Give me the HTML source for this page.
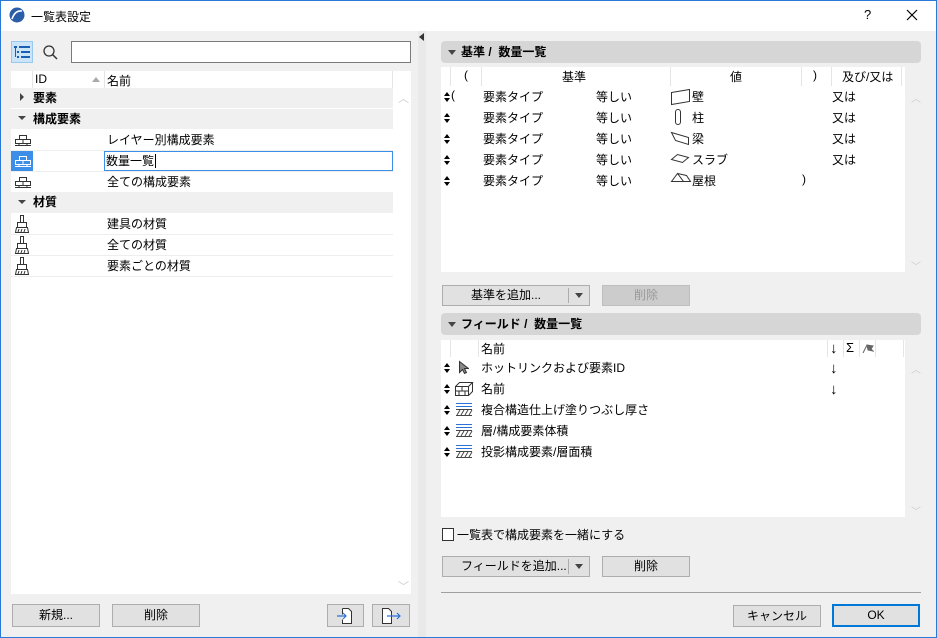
<!DOCTYPE html>
<html><head><meta charset="utf-8"><style>
*{box-sizing:border-box;margin:0;padding:0}
body{width:937px;height:638px;overflow:hidden;background:#f0f0f0;font-family:"Liberation Sans","Noto Sans CJK JP",sans-serif;font-size:12px;color:#000;position:relative}
.a{position:absolute;white-space:nowrap}
.win{position:absolute;left:0;top:0;width:937px;height:638px;border:1px solid #2b79d6;pointer-events:none}
.btn{position:absolute;background:#e1e1e1;border:1px solid #adadad;text-align:center;line-height:20px;font-size:12px}
.w{position:absolute;background:#fff}
.g{position:absolute;background:#f0f0f0}
.hdr{position:absolute;background:#d6d6d6;border-radius:4px;font-weight:bold;font-size:12px;line-height:22px;padding-left:20px}
.hdr:before{content:"";position:absolute;left:7px;top:9px;border-left:4px solid transparent;border-right:4px solid transparent;border-top:5px solid #444}
.sep{position:absolute;width:1px;background:#e5e5e5}
.ud{position:absolute;width:7px;height:10px}
.ud:before{content:"";position:absolute;left:0;top:0;border-left:3.5px solid transparent;border-right:3.5px solid transparent;border-bottom:4px solid #000}
.ud:after{content:"";position:absolute;left:0;top:6px;border-left:3.5px solid transparent;border-right:3.5px solid transparent;border-top:4px solid #000}
.dn{position:absolute;font-size:15px;line-height:15px}
</style></head><body>
<div class="w" style="left:0;top:0;width:937px;height:31px"></div>
<svg class="a" style="left:9px;top:7px" width="16" height="16"><circle cx="8" cy="8" r="7.5" fill="#2a5ea8"/><path d="M3 12 Q6 3 13 4" stroke="#fff" stroke-width="1.6" fill="none"/></svg>
<div class="a" style="left:31px;top:8px;font-size:12px">一覧表設定</div>
<div class="a" style="left:864px;top:7px;font-size:13px">?</div>
<svg class="a" style="left:906px;top:9px" width="12" height="12"><path d="M1 1L11 11M11 1L1 11" stroke="#000" stroke-width="1.2"/></svg>
<div class="g" style="left:418px;top:31px;width:8px;height:607px;background:#e9e9e9"></div>
<div class="a" style="left:419px;top:33px;border-top:4px solid transparent;border-bottom:4px solid transparent;border-right:5px solid #333"></div>

<div class="a" style="left:11px;top:41px;width:22px;height:22px;background:#cce4f7;border:1px solid #99c9ef"></div>
<svg class="a" style="left:14px;top:45px" width="16" height="14"><g fill="#1a5fb4"><rect x="0" y="1" width="3" height="2"/><rect x="5" y="1" width="11" height="2"/><rect x="3" y="6" width="2" height="2"/><rect x="7" y="6" width="9" height="2"/><rect x="3" y="11" width="2" height="2"/><rect x="7" y="11" width="9" height="2"/><rect x="1" y="3" width="1" height="9"/></g></svg>
<svg class="a" style="left:42px;top:44px" width="16" height="16"><circle cx="7" cy="7" r="5" stroke="#333" stroke-width="1.3" fill="none"/><path d="M10.5 10.5L15 15" stroke="#333" stroke-width="1.5"/></svg>
<div class="w" style="left:71px;top:41px;width:340px;height:22px;border:1px solid #7a7a7a"></div>

<div class="w" style="left:11px;top:71px;width:400px;height:523px"></div>
<div class="sep" style="left:32px;top:71px;height:17px"></div>
<div class="sep" style="left:104px;top:71px;height:17px"></div>
<div class="sep" style="left:392px;top:71px;height:17px"></div>
<div class="a" style="left:35px;top:72px">ID</div>
<div class="a" style="left:92px;top:77px;border-left:4px solid transparent;border-right:4px solid transparent;border-bottom:5px solid #aaa"></div>
<div class="a" style="left:107px;top:72px">名前</div>
<div class="g" style="left:11px;top:88px;width:382px;height:20px"></div>
<div class="a" style="left:20px;top:93px;border-top:4px solid transparent;border-bottom:4px solid transparent;border-left:4px solid #444"></div>
<div class="a" style="left:33px;top:89px;font-weight:bold">要素</div>
<div class="g" style="left:11px;top:109px;width:382px;height:20px"></div>
<div class="a" style="left:18px;top:116px;border-left:4px solid transparent;border-right:4px solid transparent;border-top:4px solid #444"></div>
<div class="a" style="left:33px;top:110px;font-weight:bold">構成要素</div>
<div class="g" style="left:11px;top:192px;width:382px;height:21px"></div>
<div class="a" style="left:18px;top:200px;border-left:4px solid transparent;border-right:4px solid transparent;border-top:4px solid #444"></div>
<div class="a" style="left:33px;top:193px;font-weight:bold">材質</div>
<div class="a" style="left:11px;top:150px;width:382px;height:1px;background:#eee"></div>
<div class="a" style="left:11px;top:171px;width:382px;height:1px;background:#eee"></div>
<div class="a" style="left:11px;top:234px;width:382px;height:1px;background:#eee"></div>
<div class="a" style="left:11px;top:255px;width:382px;height:1px;background:#eee"></div>
<div class="a" style="left:11px;top:276px;width:382px;height:1px;background:#eee"></div>
<div class="a" style="left:11px;top:151px;width:22px;height:20px;background:#3d8ee6"></div>
<div class="a" style="left:104px;top:151px;width:289px;height:20px;border:1px solid #3d8ee6;background:#fff"></div>
<svg class="a" style="left:14px;top:133px" width="18" height="14"><g fill="none" stroke="#333"><rect x="5.5" y="2.5" width="7" height="4"/><rect x="1.5" y="6.5" width="15" height="4"/><path d="M9 6.5v4M5 10.5v2M13 10.5v2M1 12.5h16"/></g></svg>
<svg class="a" style="left:14px;top:154px" width="18" height="14"><g fill="none" stroke="#fff"><rect x="5.5" y="2.5" width="7" height="4"/><rect x="1.5" y="6.5" width="15" height="4"/><path d="M9 6.5v4M5 10.5v2M13 10.5v2M1 12.5h16"/></g></svg>
<svg class="a" style="left:14px;top:175px" width="18" height="14"><g fill="none" stroke="#333"><rect x="5.5" y="2.5" width="7" height="4"/><rect x="1.5" y="6.5" width="15" height="4"/><path d="M9 6.5v4M5 10.5v2M13 10.5v2M1 12.5h16"/></g></svg>
<div class="a" style="left:107px;top:131px">レイヤー別構成要素</div>
<div class="a" style="left:106px;top:152px">数量一覧<span style="border-left:1px solid #000;margin-left:1px"></span></div>
<div class="a" style="left:107px;top:173px">全ての構成要素</div>
<svg class="a" style="left:14px;top:215px" width="18" height="19"><g fill="none" stroke="#333"><rect x="6.5" y="0.5" width="3" height="7"/><path d="M3.5 7.5h9v5h-9zM2.5 12.5h11l1 5h-13zM4 17l1-3M7 17l1-3M10 17l1-3"/></g></svg>
<svg class="a" style="left:14px;top:236px" width="18" height="19"><g fill="none" stroke="#333"><rect x="6.5" y="0.5" width="3" height="7"/><path d="M3.5 7.5h9v5h-9zM2.5 12.5h11l1 5h-13zM4 17l1-3M7 17l1-3M10 17l1-3"/></g></svg>
<svg class="a" style="left:14px;top:257px" width="18" height="19"><g fill="none" stroke="#333"><rect x="6.5" y="0.5" width="3" height="7"/><path d="M3.5 7.5h9v5h-9zM2.5 12.5h11l1 5h-13zM4 17l1-3M7 17l1-3M10 17l1-3"/></g></svg>
<div class="a" style="left:107px;top:215px">建具の材質</div>
<div class="a" style="left:107px;top:236px">全ての材質</div>
<div class="a" style="left:107px;top:257px">要素ごとの材質</div>
<div class="a" style="left:398px;top:90px;color:#ccc;font-size:11px">︿</div>
<div class="a" style="left:398px;top:578px;color:#ccc;font-size:11px">﹀</div>

<div class="btn" style="left:12px;top:604px;width:88px;height:23px">新規...</div>
<div class="btn" style="left:112px;top:604px;width:88px;height:23px">削除</div>
<div class="btn" style="left:327px;top:604px;width:37px;height:23px"></div>
<div class="btn" style="left:372px;top:604px;width:38px;height:23px"></div>
<svg class="a" style="left:336px;top:607px" width="20" height="18"><path d="M6.5 1.5h6l3 3v12h-9v-4M6.5 7.5v-6" fill="#fff" stroke="#333"/><path d="M1 9h9M7 6l3 3-3 3" stroke="#2a72d8" fill="none" stroke-width="1.2"/></svg>
<svg class="a" style="left:381px;top:607px" width="22" height="18"><path d="M1.5 1.5h6l3 3v12h-9z" fill="#fff" stroke="#333"/><path d="M6 9h13M16 6l3 3-3 3" stroke="#2a72d8" fill="none" stroke-width="1.2"/></svg>

<div class="hdr" style="left:441px;top:41px;width:480px;height:22px">基準 /&nbsp; 数量一覧</div>
<div class="w" style="left:441px;top:67px;width:464px;height:205px"></div>
<div class="sep" style="left:450px;top:67px;height:19px"></div>
<div class="sep" style="left:481px;top:67px;height:19px"></div>
<div class="sep" style="left:670px;top:67px;height:19px"></div>
<div class="sep" style="left:801px;top:67px;height:19px"></div>
<div class="sep" style="left:831px;top:67px;height:19px"></div>
<div class="sep" style="left:901px;top:67px;height:19px"></div>
<div class="g" style="left:905px;top:67px;width:16px;height:19px"></div>
<div class="a" style="left:464px;top:68px">(</div>
<div class="a" style="left:562px;top:68px">基準</div>
<div class="a" style="left:730px;top:68px">値</div>
<div class="a" style="left:813px;top:68px">)</div>
<div class="a" style="left:842px;top:68px">及び/又は</div>
<div class="a" style="left:911px;top:90px;color:#ccc;font-size:10px">︿</div>
<div class="a" style="left:911px;top:258px;color:#ccc;font-size:10px">﹀</div>

<div class="ud" style="left:444px;top:92px"></div><div class="a" style="left:451px;top:88px">(</div>
<div class="ud" style="left:444px;top:113px"></div>
<div class="ud" style="left:444px;top:134px"></div>
<div class="ud" style="left:444px;top:155px"></div>
<div class="ud" style="left:444px;top:176px"></div>
<div class="a" style="left:483px;top:88px">要素タイプ</div><div class="a" style="left:596px;top:88px">等しい</div>
<div class="a" style="left:483px;top:109px">要素タイプ</div><div class="a" style="left:596px;top:109px">等しい</div>
<div class="a" style="left:483px;top:130px">要素タイプ</div><div class="a" style="left:596px;top:130px">等しい</div>
<div class="a" style="left:483px;top:151px">要素タイプ</div><div class="a" style="left:596px;top:151px">等しい</div>
<div class="a" style="left:483px;top:172px">要素タイプ</div><div class="a" style="left:596px;top:172px">等しい</div>
<svg class="a" style="left:670px;top:88px" width="22" height="18"><path d="M1.5 4.5l18-3v12l-18 3z" fill="none" stroke="#333"/></svg>
<svg class="a" style="left:673px;top:108px" width="10" height="18"><rect x="2.5" y="1.5" width="5" height="15" rx="2.5" fill="none" stroke="#333"/></svg>
<svg class="a" style="left:670px;top:130px" width="20" height="16"><path d="M1.5 2.5l17 5v7l-13-4z" fill="none" stroke="#333"/></svg>
<svg class="a" style="left:670px;top:153px" width="20" height="12"><path d="M1.5 6.5l6-5 11 3-6 5z" fill="none" stroke="#333"/></svg>
<svg class="a" style="left:670px;top:172px" width="22" height="16"><path d="M1.5 9.5l6-8 6 8zM7.5 1.5l9 2 4 6h-7" fill="none" stroke="#333"/></svg>
<div class="a" style="left:692px;top:88px">壁</div>
<div class="a" style="left:692px;top:109px">柱</div>
<div class="a" style="left:692px;top:130px">梁</div>
<div class="a" style="left:692px;top:151px">スラブ</div>
<div class="a" style="left:692px;top:172px">屋根</div>
<div class="a" style="left:802px;top:172px">)</div>
<div class="a" style="left:832px;top:88px">又は</div>
<div class="a" style="left:832px;top:109px">又は</div>
<div class="a" style="left:832px;top:130px">又は</div>
<div class="a" style="left:832px;top:151px">又は</div>

<div class="btn" style="left:442px;top:285px;width:148px;height:21px;line-height:19px;text-align:left;padding-left:28px">基準を追加...</div>
<div class="a" style="left:568px;top:288px;width:1px;height:15px;background:#adadad"></div>
<div class="a" style="left:575px;top:293px;border-left:4px solid transparent;border-right:4px solid transparent;border-top:5px solid #444"></div>
<div class="btn" style="left:602px;top:285px;width:88px;height:21px;line-height:19px;color:#999;background:#ccc;border-color:#bfbfbf">削除</div>

<div class="hdr" style="left:441px;top:313px;width:480px;height:22px">フィールド /&nbsp; 数量一覧</div>
<div class="w" style="left:441px;top:340px;width:464px;height:177px"></div>
<div class="sep" style="left:450px;top:340px;height:17px"></div>
<div class="sep" style="left:478px;top:340px;height:17px"></div>
<div class="sep" style="left:827px;top:340px;height:17px"></div>
<div class="sep" style="left:843px;top:340px;height:17px"></div>
<div class="sep" style="left:859px;top:340px;height:17px"></div>
<div class="sep" style="left:875px;top:340px;height:17px"></div>
<div class="sep" style="left:903px;top:340px;height:17px"></div>
<div class="g" style="left:905px;top:340px;width:16px;height:17px"></div>
<div class="a" style="left:481px;top:340px">名前</div>
<div class="dn" style="left:830px;top:341px">↓</div>
<div class="a" style="left:846px;top:340px;font-size:13px">Σ</div>
<svg class="a" style="left:862px;top:342px" width="12" height="12"><path d="M1 11L5 3M5 3l6 1-2 3 2 2-5-1z" fill="#666" stroke="#666"/></svg>
<div class="a" style="left:911px;top:361px;color:#ccc;font-size:10px">︿</div>
<div class="a" style="left:911px;top:503px;color:#ccc;font-size:10px">﹀</div>
<div class="ud" style="left:444px;top:363px"></div>
<div class="ud" style="left:444px;top:384px"></div>
<div class="ud" style="left:444px;top:405px"></div>
<div class="ud" style="left:444px;top:426px"></div>
<div class="ud" style="left:444px;top:447px"></div>
<svg class="a" style="left:457px;top:360px" width="12" height="15"><path d="M2.5 1.5v11l3-3 2 4 2-1-2-4h4z" fill="#888" stroke="#333"/></svg>
<svg class="a" style="left:454px;top:381px" width="20" height="15"><g fill="none" stroke="#333"><path d="M1.5 5.5h13v9h-13zM1.5 5.5l4-4h13l-4 4M18.5 1.5v9l-4 4M1.5 10h13M8 5.5v4.5M5 10v4.5M11 10v4.5"/></g></svg>
<svg class="a" style="left:455px;top:402px" width="18" height="15"><path d="M1 1.5h16M1 4.5h16" stroke="#2a72d8"/><path d="M1 7.5h16M1 13.5h16M2 13l3-5M6 13l3-5M10 13l3-5M14 13l3-5" stroke="#444"/></svg>
<svg class="a" style="left:455px;top:423px" width="18" height="15"><path d="M1 1.5h16M1 4.5h16" stroke="#2a72d8"/><path d="M1 7.5h16M1 13.5h16M2 13l3-5M6 13l3-5M10 13l3-5M14 13l3-5" stroke="#444"/></svg>
<svg class="a" style="left:455px;top:444px" width="18" height="15"><path d="M1 1.5h16M1 4.5h16" stroke="#2a72d8"/><path d="M1 7.5h16M1 13.5h16M2 13l3-5M6 13l3-5M10 13l3-5M14 13l3-5" stroke="#444"/></svg>
<div class="a" style="left:481px;top:359px">ホットリンクおよび要素ID</div>
<div class="a" style="left:481px;top:380px">名前</div>
<div class="a" style="left:481px;top:401px">複合構造仕上げ塗りつぶし厚さ</div>
<div class="a" style="left:481px;top:422px">層/構成要素体積</div>
<div class="a" style="left:481px;top:443px">投影構成要素/層面積</div>
<div class="dn" style="left:830px;top:361px">↓</div>
<div class="dn" style="left:830px;top:382px">↓</div>

<div class="a" style="left:442px;top:528px;width:12px;height:13px;border:1px solid #333;background:#fff"></div>
<div class="a" style="left:457px;top:526px">一覧表で構成要素を一緒にする</div>
<div class="btn" style="left:442px;top:556px;width:148px;height:21px;line-height:19px;text-align:left;padding-left:18px">フィールドを追加...</div>
<div class="a" style="left:568px;top:559px;width:1px;height:15px;background:#adadad"></div>
<div class="a" style="left:575px;top:564px;border-left:4px solid transparent;border-right:4px solid transparent;border-top:5px solid #444"></div>
<div class="btn" style="left:602px;top:556px;width:88px;height:21px;line-height:19px">削除</div>
<div class="a" style="left:441px;top:592px;width:480px;height:1px;background:#a0a0a0"></div>
<div class="btn" style="left:733px;top:605px;width:88px;height:22px">キャンセル</div>
<div class="btn" style="left:832px;top:604px;width:88px;height:23px;border:2px solid #0078d7;line-height:19px">OK</div>
<div class="win"></div>
</body></html>
